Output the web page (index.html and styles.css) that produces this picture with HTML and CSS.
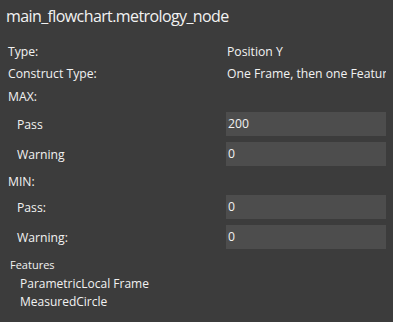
FILE: index.html
```html
<!DOCTYPE html>
<html lang="en">
<head>
  <meta charset="UTF-8" />
  <title>main_flowchart.metrology_node</title>
  <link rel="stylesheet" href="styles.css">
</head>
<body>
  <!-- Node title -->
  <div class="node-title">main_flowchart.metrology_node</div>

  <!-- Properties -->
  <div class="props">
    <div class="prop-row">
      <span class="prop-label">Type:</span>
      <span class="prop-value">Position Y</span>
    </div>
    <div class="prop-row">
      <span class="prop-label">Construct Type:</span>
      <span class="prop-value">One Frame, then one Feature</span>
    </div>

    <div class="section-label">MAX:</div>
    <div class="field-row first">
      <span class="field-label">Pass</span>
      <div class="field-box">200</div>
    </div>
    <div class="field-row">
      <span class="field-label">Warning</span>
      <div class="field-box">0</div>
    </div>

    <div class="section-label min">MIN:</div>
    <div class="field-row first-min">
      <span class="field-label">Pass:</span>
      <div class="field-box">0</div>
    </div>
    <div class="field-row">
      <span class="field-label">Warning:</span>
      <div class="field-box">0</div>
    </div>
  </div>

  <!-- Features -->
  <div class="features">
    <div class="features-title">Features</div>
    <ul class="feature-list">
      <li>ParametricLocal Frame</li>
      <li>MeasuredCircle</li>
    </ul>
  </div>
</body>
</html>
```

FILE: styles.css
```css
* {
  margin: 0;
  padding: 0;
  box-sizing: border-box;
}

body {
  font-family: 'Open Sans', 'Noto Sans', sans-serif;
  background: #3c3c3c;
  color: #f2f2f2;
  width: 393px;
  height: 322px;
  overflow: hidden;
}

/* Title */
.node-title {
  font-size: 16px;
  line-height: 22px;
  padding: 5px 0 0 6px;
  height: 41px;
  white-space: nowrap;
  letter-spacing: -0.6px;
}

/* Property rows */
.props {
  padding: 0 7px 0 8px;
  font-size: 12.2px;
}

.prop-row {
  display: grid;
  grid-template-columns: 219px 159px;
  height: 22px;
  line-height: 22px;
}

.prop-value {
  white-space: nowrap;
  overflow: hidden;
}

.section-label {
  height: 22px;
  line-height: 22px;
  margin-top: 1px;
}

.section-label.min {
  margin-top: 5px;
}

.field-row {
  display: grid;
  grid-template-columns: 218px 160px;
  align-items: center;
  margin-top: 6px;
}

.field-row.first {
  margin-top: 4px;
}

.field-row.first-min {
  margin-top: 2px;
}

.field-label {
  padding-left: 9px;
}

.field-box {
  background: #4d4d4d;
  height: 24px;
  line-height: 24px;
  padding-left: 2px;
}

/* Features */
.features {
  padding: 8px 0 0 10px;
  font-size: 11px;
}

.features-title {
  line-height: 16px;
}

.feature-list {
  list-style: none;
  padding-left: 10px;
  margin-top: 2px;
  font-size: 12px;
}

.feature-list li {
  line-height: 18px;
}
```
